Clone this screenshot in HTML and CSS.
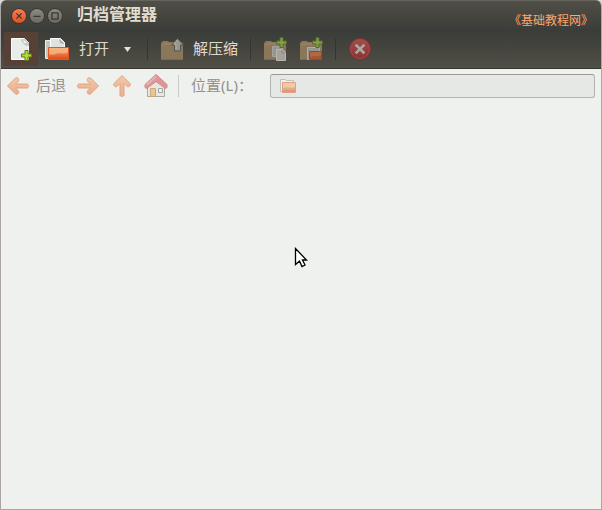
FILE: index.html
```html
<!DOCTYPE html>
<html lang="zh-CN">
<head>
<meta charset="utf-8">
<meta name="viewport" content="width=device-width, initial-scale=1">
<title>归档管理器</title>
<link rel="stylesheet" href="styles.css">
</head>
<body>
<svg class="defs" aria-hidden="true">
  <defs>
    <linearGradient id="peach" x1="0" y1="0" x2="0" y2="1"><stop offset="0" stop-color="#f0cba6"/><stop offset="1" stop-color="#ebac90"/></linearGradient>
    <linearGradient id="orange" x1="0" y1="0" x2="0" y2="1"><stop offset="0" stop-color="#f6a365"/><stop offset=".5" stop-color="#ee7b45"/><stop offset="1" stop-color="#dc4618"/></linearGradient>
    <linearGradient id="red" x1="0" y1="0" x2="0" y2="1"><stop offset="0" stop-color="#a1504c"/><stop offset="1" stop-color="#8d3031"/></linearGradient>
    <g id="box">
      <path d="M1 6l2-2h5l1 1h13l1 2v16H1z" fill="#8b7658"/>
      <path d="M1 10h22v13H1z" fill="#8a7659"/>
      <path d="M2 9l2-2h17" fill="none" stroke="#9c886a"/>
      <path d="M1 22.500h22" stroke="#7d6a50"/>
    </g>
    <path id="plus" d="M4 .5h3V4h3.500v3H7v3.500H4V7H.5V4H4z"/>
  </defs>
</svg>
<div class="window">
  <header class="titlebar">
    <div class="controls">
      <button class="control close" aria-label="关闭"><svg viewBox="0 0 16 16"><path d="M5 5l6 6m0-6l-6 6"/></svg></button>
      <button class="control" aria-label="最小化"><svg viewBox="0 0 16 16"><path d="M4 8.500h8"/></svg></button>
      <button class="control" aria-label="最大化"><svg viewBox="0 0 16 16"><path d="M4.500 4.500h7v7h-7z"/></svg></button>
    </div>
    <h1 class="title">归档管理器</h1>
    <span class="site">《基础教程网》</span>
  </header>

  <div class="toolbar" role="toolbar">
    <button class="tool active" aria-label="新建">
      <svg class="icon" viewBox="0 0 24 24">
        <path d="M2.500 1.500h13l4 4v17h-17z" fill="#e9ede9" stroke="#fbfbf9"/>
        <path d="M12 2h4l4 4v3c-5 0-7-3-8-7z" fill="#c3c6c1"/>
        <path d="M14 2c1 2 1 3 0 4 2-.5 4 0 5 1z" fill="#fff"/>
        <use href="#plus" x="12" y="13" fill="#b8d832" stroke="#568016"/>
      </svg>
    </button>
    <button class="tool open">
      <svg class="icon wide" viewBox="0 0 26 24">
        <path d="M1.500 3.500h7v18h-7z" fill="#c7c4b9" stroke="#f2f0e9"/>
        <path d="M6.500 1.500h10l4 4v12h-14z" fill="#dfe2df" stroke="#fff"/>
        <path d="M15 2l1 4 5 1z" fill="#aaaea9"/>
        <path d="M4.500 10.500h20v12h-20z" fill="url(#orange)" stroke="#e55722"/>
        <path d="M5 11h19v4c-5 3-9 0-12 2-3 1-5 1-7 0z" fill="#f8c08d" opacity=".65"/>
      </svg>
      <span>打开</span>
    </button>
    <button class="menu" aria-label="最近打开"><svg viewBox="0 0 7 5"><path d="M0 0h7L3.500 5z"/></svg></button>
    <span class="sep"></span>
    <button class="tool extract">
      <svg class="icon" viewBox="0 0 24 24">
        <use href="#box"/>
        <path d="M17.500 1.500L23.500 8h-3v6h-6V8h-3z" fill="#969590" stroke="#55554d"/>
        <path d="M17.500 3L14 7h2v5" fill="none" stroke="#aaa9a3"/>
      </svg>
      <span>解压缩</span>
    </button>
    <span class="sep"></span>
    <button class="tool" aria-label="添加文件">
      <svg class="icon" viewBox="0 0 24 24">
        <use href="#box"/>
        <path d="M9.500 9.500h10v10h-10z" fill="#969590" stroke="#a5a49c"/>
        <path d="M13.500 12.500h6l3 3v8h-9z" fill="#a3a39c" stroke="#b7b6ae"/>
        <path d="M19 13v3h3" fill="none" stroke="#85847c"/>
        <use href="#plus" x="13" fill="#8a9b4e" stroke="#4f6e21"/>
      </svg>
    </button>
    <button class="tool" aria-label="添加文件夹">
      <svg class="icon" viewBox="0 0 24 24">
        <use href="#box"/>
        <path d="M8.500 10.500h12v12h-12z" fill="#96958e" stroke="#adaca4"/>
        <path d="M10.500 14.500h12v8h-12z" fill="#a75534" stroke="#a34522"/>
        <path d="M11 15h11v3c-3 2-6 0-11 2z" fill="#b06a42"/>
        <use href="#plus" x="13" fill="#8a9b4e" stroke="#4f6e21"/>
      </svg>
    </button>
    <span class="sep"></span>
    <button class="tool stop" aria-label="停止">
      <svg class="icon" viewBox="0 0 24 24">
        <circle cx="12" cy="12" r="10.500" fill="url(#red)" stroke="#843033"/>
        <circle cx="12" cy="12" r="9.500" fill="none" stroke="#a04a4a"/>
        <path d="M8.500 8.500l7 7m0-7l-7 7" stroke="#aaa9a2" stroke-width="2.500" stroke-linecap="square"/>
      </svg>
    </button>
  </div>

  <nav class="location">
    <button class="nav">
      <svg class="icon" viewBox="0 0 24 24"><path class="arrow" d="M1.500 12l8-8c2-1 4 1 3 3l-3 3H21c2 0 2 4 0 4H9.500l3 3c1 2-1 4-3 3z"/></svg>
      <span>后退</span>
    </button>
    <button class="nav" aria-label="前进">
      <svg class="icon" viewBox="0 0 24 24"><path class="arrow" d="M22.500 12l-8-8c-2-1-4 1-3 3l3 3H3c-2 0-2 4 0 4h11.500l-3 3c-1 2 1 4 3 3z"/></svg>
    </button>
    <button class="nav" aria-label="向上">
      <svg class="icon" viewBox="0 0 24 24"><path class="arrow" d="M12 1.500l8 8c1 2-1 4-3 3l-3-3V21c0 2-4 2-4 0V9.500l-3 3c-2 1-4-1-3-3z"/></svg>
    </button>
    <button class="nav" aria-label="主目录">
      <svg class="icon" viewBox="0 0 24 24">
        <path d="M3.500 10.500L12 4l8.500 6.500v12h-17z" fill="#e6e7e3" stroke="#a9aaa6"/>
        <path d="M6.500 14.500h5v8h-5z" fill="#eac68c" stroke="#caa777"/>
        <path d="M14.500 14.500h4v4h-4z" fill="#eff0ed" stroke="#a5a6a2"/>
        <path d="M12 .5l11 10v3l-1.500 1L12 7.500l-9.500 7-1.500-1v-3z" fill="#dc9695" stroke="#cf8986"/>
        <path d="M12 2.500L2.500 11" fill="none" stroke="#e9b3b0" stroke-width="2"/>
      </svg>
    </button>
    <span class="sep"></span>
    <label class="label" for="path">位置(L)：</label>
    <div class="field">
      <svg class="folder" viewBox="0 0 16 16">
        <path d="M.5 13.500V1.500h5l1 1h7v11z" fill="#eff0ed" stroke="#c0c1bd"/>
        <path d="M2.500 4.500h13v10h-13z" fill="#e9ab86" stroke="#e3a081"/>
        <path d="M3 5h12v4c-4 2-7-1-12 1z" fill="#f0cba8"/>
        <path d="M3 12h12v2H3z" fill="#df987c"/>
      </svg>
      <input id="path" type="text" disabled>
    </div>
  </nav>
  <main class="content"></main>
  <svg class="pointer" viewBox="0 0 14 21" aria-hidden="true"><path d="M1.500 1.500v16l4-3.500 2.500 5.500 3-1.500-2.500-5h4z" fill="#fff" stroke="#000" stroke-width="1.300"/></svg>
</div>
</body>
</html>
```
FILE: styles.css
```css
* {
  box-sizing: border-box;
}

body {
  margin: 0;
  background: #d8d8d5;
  font: 15px/20px "Noto Sans", "Noto Sans CJK SC", sans-serif;
}

button {
  display: flex;
  align-items: center;
  margin: 0;
  padding: 0;
  border: 0;
  background: none;
  color: inherit;
  font: inherit;
}

svg {
  display: block;
  flex: none;
}

.defs {
  position: absolute;
  width: 0;
  height: 0;
}

.window {
  position: relative;
  display: flex;
  flex-direction: column;
  min-height: 100vh;
  overflow: hidden;
  border: 1px solid #aba5a4;
  border-top: 0;
  border-radius: 6px 6px 0 0;
  background: #eff1ee;
}

.titlebar {
  display: flex;
  align-items: center;
  height: 30px;
  padding: 0 8px 0 10px;
  border-top: 1px solid #66655d;
  background: linear-gradient(#504f47, #3c3d39);
  color: #e0dccf;
}

.controls {
  display: flex;
  gap: 2px;
}

.control {
  width: 16px;
  height: 16px;
  border: 1px solid #383731;
  border-radius: 50%;
  background: linear-gradient(#8b8980, #6b6961);
}

.control.close {
  background: linear-gradient(#f47d53, #e35022);
}

.control svg {
  width: 14px;
  height: 14px;
  fill: none;
  stroke: #3a3832;
  stroke-width: 1.500;
}

.title {
  flex: 1;
  margin: 0;
  padding: 0 0 6px 14px;
  font-family: "Noto Sans CJK SC", sans-serif;
  font-size: 16px;
  font-weight: 700;
  line-height: 20px;
}

.site {
  padding-top: 8px;
  color: #ffa66b;
  font-family: "Noto Sans CJK SC", sans-serif;
  font-size: 12px;
}

.toolbar {
  display: flex;
  align-items: center;
  height: 39px;
  padding: 0 3px;
  border-bottom: 1px solid #37362f;
  background: linear-gradient(#3a3c39, #45453e 50%, #504f47);
  color: #dfdbd2;
}

.tool {
  height: 34px;
  padding: 0 6px;
}

.tool.active {
  padding: 0 5px;
  background: #574036;
}

.icon {
  width: 24px;
  height: 24px;
}

.icon.wide {
  width: 26px;
}

.open,
.extract {
  gap: 9px;
}

.tool span,
.nav span,
.label {
  padding-bottom: 2px;
}

.menu {
  padding: 0 10px 0 9px;
}

.menu svg {
  width: 7px;
  height: 5px;
  fill: #e5e2d8;
}

.sep {
  flex: none;
  width: 1px;
  height: 22px;
  margin: 0 6px;
  background: #35352f;
}

.location {
  display: flex;
  align-items: center;
  height: 34px;
  padding: 0 6px 0 0;
  color: #95908b;
}

.nav {
  gap: 6px;
  padding: 0 5px;
}

.arrow {
  fill: url(#peach);
  stroke: #e3a184;
}

.location .sep {
  margin: 0 12px 0 5px;
  background: #c9cac6;
}

.label {
  flex: none;
  width: 79px;
  white-space: nowrap;
}

.field {
  display: flex;
  flex: 1;
  align-items: center;
  height: 24px;
  padding: 0 9px;
  border: 1px solid #b5b3b0;
  border-top-color: #9c9894;
  border-radius: 3px;
  background: #e6e8e5;
}

.folder {
  width: 16px;
  height: 16px;
}

.field input {
  flex: 1;
  min-width: 0;
  height: 20px;
  padding: 0 6px;
  border: 0;
  background: transparent;
  font: inherit;
}

.content {
  flex: 1;
}

.pointer {
  position: absolute;
  top: 247px;
  left: 293px;
  width: 14px;
  height: 21px;
}
```
